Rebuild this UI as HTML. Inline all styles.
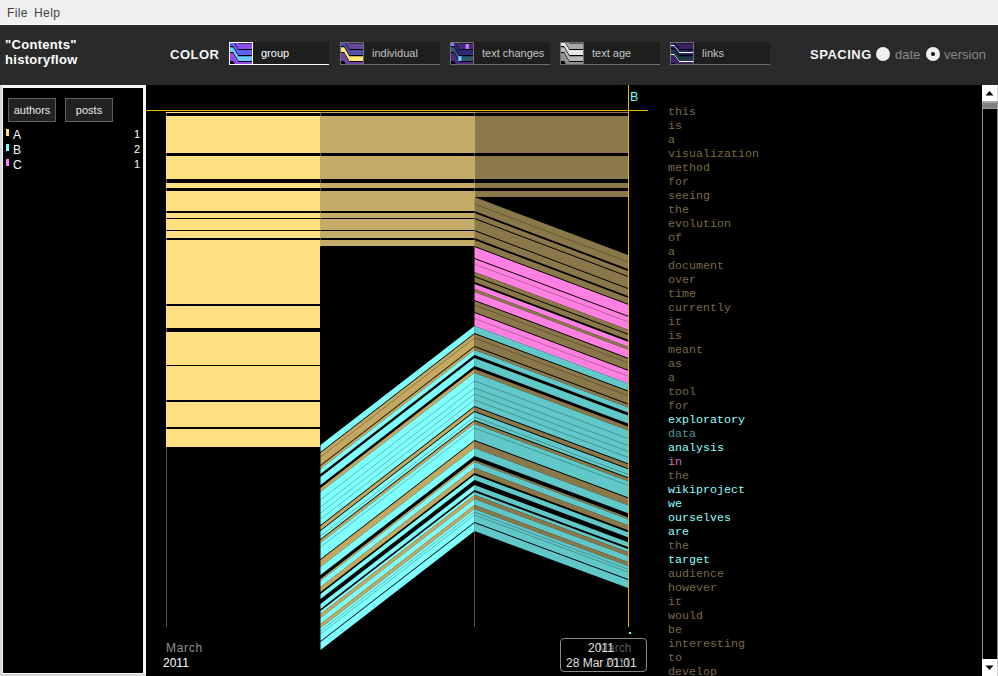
<!DOCTYPE html>
<html><head><meta charset="utf-8"><style>
*{margin:0;padding:0;box-sizing:border-box}
html,body{width:998px;height:676px;overflow:hidden;background:#000;font-family:"Liberation Sans",sans-serif}
.abs{position:absolute}
#menu{left:0;top:0;width:998px;height:25px;background:#f0f0f0;border-bottom:1px solid #fafafa}
#menu span{position:absolute;top:6px;font-size:12px;color:#404040;letter-spacing:0.4px}
#tb{left:0;top:25px;width:998px;height:60px;background:#2a2a2a}
.ttl{color:#fff;font-weight:bold;font-size:13px;left:5px;letter-spacing:0.3px}
.lbl{color:#f4f4f4;font-weight:bold;font-size:13px;letter-spacing:0.5px}
.btn{position:absolute;top:42px;height:23px;width:100px;background:#1e1e1e;border-bottom:1px solid #707070}
.btn.sel{border-bottom:1px solid #fff}
.sw{position:absolute;left:0;top:0;width:24px;height:23px;border:1px solid #707070;background:#000;overflow:hidden}
.sel .sw{border-color:#fff}
.btn span{position:absolute;left:32px;top:5px;font-size:11px;color:#c4c4c4;white-space:nowrap}
.sel span{color:#fff}
#panel{left:0;top:85px;width:146px;height:591px;background:#d8d8d8}
#pin{left:3px;top:3px;width:140px;height:585px;background:#000}
#pbor{left:2px;top:0px;width:144px;height:589px;border-style:solid;border-color:#f4f4f4;border-width:3px 3px 1px 1px}
.pb{position:absolute;top:13px;height:24px;border:1px solid #606060;background:#222;color:#e8e8e8;font-size:11px;text-align:center;line-height:23px}
.leg{position:absolute;left:13px;color:#fff;font-size:12px}
.legc{position:absolute;left:6px;width:3px;height:7px}
.num{position:absolute;left:134px;color:#fff;font-size:11px}
#viz{left:146px;top:85px;width:836px;height:591px;background:#000}
#words{left:668px;top:105px;font-family:"Liberation Mono",monospace;font-size:11.67px;line-height:14px;font-weight:normal}
#sb{left:982px;top:85px;width:16px;height:591px;background:#000;border-left:1px solid #909090;border-right:1px solid #909090}
</style></head><body>
<div id="menu" class="abs"><span style="left:7px">File</span><span style="left:34px">Help</span></div>
<div id="tb" class="abs">
<div class="abs ttl" style="top:12px">"Contents"</div>
<div class="abs ttl" style="top:27px">historyflow</div>
<div class="abs lbl" style="left:170px;top:22px">COLOR</div>
<div class="abs lbl" style="left:810px;top:22px">SPACING</div>
</div>
<div class="btn sel" style="left:229px"><div class="sw"><svg width="22" height="21" viewBox="0 0 21 21" preserveAspectRatio="none" style="position:absolute;left:0;top:0"><polygon points="0,-8.5 3,-8.5 8,0.5 21,0.5 21,6 8,6 3,-3 0,-3" fill="#9050e8"/><polygon points="0,-2 3,-2 8,7 21,7 21,12 8,12 3,3 0,3" fill="#6060ff"/><polygon points="0,4.199999999999999 3,4.199999999999999 8,13.2 21,13.2 21,18 8,18 3,9 0,9" fill="#70c8ff"/><polygon points="0,10 3,10 8,19 21,19 21,27 8,27 3,18 0,18" fill="#9050e8"/></svg></div><span>group</span></div>
<div class="btn" style="left:340px"><div class="sw"><svg width="22" height="21" viewBox="0 0 21 21" preserveAspectRatio="none" style="position:absolute;left:0;top:0"><polygon points="0,-8.5 3,-8.5 8,0.5 21,0.5 21,6 8,6 3,-3 0,-3" fill="#6a4898"/><polygon points="0,-2 3,-2 8,7 21,7 21,12 8,12 3,3 0,3" fill="#5050a8"/><polygon points="0,4.199999999999999 3,4.199999999999999 8,13.2 21,13.2 21,18 8,18 3,9 0,9" fill="#ffe878"/><polygon points="0,10 3,10 8,19 21,19 21,27 8,27 3,18 0,18" fill="#6a48a0"/></svg></div><span>individual</span></div>
<div class="btn" style="left:450px"><div class="sw"><svg width="22" height="21" viewBox="0 0 21 21" preserveAspectRatio="none" style="position:absolute;left:0;top:0"><polygon points="0,-8.5 3,-8.5 8,0.5 21,0.5 21,6 8,6 3,-3 0,-3" fill="#4a2a78"/><polygon points="0,-2 3,-2 8,7 21,7 21,12 8,12 3,3 0,3" fill="#302878"/><polygon points="0,4.199999999999999 3,4.199999999999999 8,13.2 21,13.2 21,18 8,18 3,9 0,9" fill="#305870"/><polygon points="0,10 3,10 8,19 21,19 21,27 8,27 3,18 0,18" fill="#4a2a80"/><rect x="14" y="1" width="3" height="5" fill="#c080ff"/><rect x="7" y="13.2" width="3" height="4.8" fill="#70d0ff"/><rect x="0" y="0" width="3" height="3" fill="#8080ff"/></svg></div><span>text changes</span></div>
<div class="btn" style="left:560px"><div class="sw"><svg width="22" height="21" viewBox="0 0 21 21" preserveAspectRatio="none" style="position:absolute;left:0;top:0"><polygon points="0,-8.5 3,-8.5 8,0.5 21,0.5 21,6 8,6 3,-3 0,-3" fill="#a8a8a8"/><polygon points="0,-2 3,-2 8,7 21,7 21,12 8,12 3,3 0,3" fill="#e8e8e8"/><polygon points="0,4.199999999999999 3,4.199999999999999 8,13.2 21,13.2 21,18 8,18 3,9 0,9" fill="#b8b8b8"/><polygon points="0,10 3,10 8,19 21,19 21,27 8,27 3,18 0,18" fill="#909090"/></svg></div><span>text age</span></div>
<div class="btn" style="left:670px"><div class="sw"><svg width="22" height="21" viewBox="0 0 21 21" preserveAspectRatio="none" style="position:absolute;left:0;top:0"><polygon points="0,-6.5 3,-6.5 8,0.5 21,0.5 21,6 8,6 3,-1 0,-1" fill="#3a2060"/><polygon points="0,0 3,0 8,7 21,7 21,9 8,9 3,2 0,2" fill="#202068"/><polygon points="0,2 3,2 8,9 21,9 21,10.2 8,10.2 3,3.1999999999999993 0,3.1999999999999993" fill="#ffffff"/><polygon points="0,3.1999999999999993 3,3.1999999999999993 8,10.2 21,10.2 21,12 8,12 3,5 0,5" fill="#202068"/><polygon points="0,6.199999999999999 3,6.199999999999999 8,13.2 21,13.2 21,18 8,18 3,11 0,11" fill="#203848"/><polygon points="0,11 3,11 8,18 21,18 21,19.3 8,19.3 3,12.3 0,12.3" fill="#ffffff"/><polygon points="0,12.3 3,12.3 8,19.3 21,19.3 21,27 8,27 3,20 0,20" fill="#3a2060"/></svg></div><span>links</span></div>
<div class="abs" style="left:876px;top:47px;width:14px;height:14px;border-radius:50%;background:#f0f0f0"></div>
<div class="abs" style="left:895px;top:47px;font-size:13px;color:#888">date</div>
<div class="abs" style="left:926px;top:47px;width:14px;height:14px;border-radius:50%;background:#f0f0f0"><div class="abs" style="left:5px;top:5px;width:4px;height:4px;border-radius:50%;background:#000"></div></div>
<div class="abs" style="left:944px;top:47px;font-size:13px;color:#888">version</div>
<div id="panel" class="abs"><div id="pin" class="abs"></div><div id="pbor" class="abs"></div>
<div class="pb" style="left:8px;width:48px">authors</div>
<div class="pb" style="left:65px;width:48px">posts</div>
<div class="legc" style="top:44px;background:#ffe080"></div><div class="leg" style="top:43px">A</div><div class="num" style="top:43px">1</div>
<div class="legc" style="top:59px;background:#80ffff"></div><div class="leg" style="top:58px">B</div><div class="num" style="top:58px">2</div>
<div class="legc" style="top:74px;background:#ff80ff"></div><div class="leg" style="top:73px">C</div><div class="num" style="top:73px">1</div>
</div>
<div id="viz" class="abs"></div>
<svg class="abs" style="left:0;top:0" width="998" height="676" viewBox="0 0 998 676">
<rect x="166" y="112" width="1" height="515" fill="#505050"/>
<rect x="320" y="112" width="1" height="135" fill="#505050"/>
<rect x="474" y="112" width="1" height="135" fill="#505050"/>
<rect x="474" y="531" width="1" height="96" fill="#505050"/>
<rect x="166" y="112" width="154" height="1" fill="#ffe080"/>
<rect x="166" y="116" width="154" height="37" fill="#ffe080"/>
<rect x="166" y="156" width="154" height="23" fill="#ffe080"/>
<rect x="166" y="183" width="154" height="5" fill="#ffe080"/>
<rect x="166" y="191" width="154" height="20" fill="#ffe080"/>
<rect x="166" y="213" width="154" height="5" fill="#ffe080"/>
<rect x="166" y="219" width="154" height="11" fill="#ffe080"/>
<rect x="166" y="231" width="154" height="7" fill="#ffe080"/>
<rect x="166" y="240" width="154" height="64" fill="#ffe080"/>
<rect x="166" y="306" width="154" height="22" fill="#ffe080"/>
<rect x="166" y="332" width="154" height="33" fill="#ffe080"/>
<rect x="166" y="366" width="154" height="34" fill="#ffe080"/>
<rect x="166" y="402" width="154" height="25" fill="#ffe080"/>
<rect x="166" y="429" width="154" height="18" fill="#ffe080"/>
<rect x="320" y="112" width="155" height="1" fill="#c4ac68"/>
<rect x="320" y="116" width="155" height="37" fill="#c4ac68"/>
<rect x="320" y="156" width="155" height="23" fill="#c4ac68"/>
<rect x="320" y="183" width="155" height="5" fill="#c4ac68"/>
<rect x="320" y="191" width="155" height="20" fill="#c4ac68"/>
<rect x="320" y="213" width="155" height="5" fill="#c4ac68"/>
<rect x="320" y="219" width="155" height="11" fill="#c4ac68"/>
<rect x="320" y="231" width="155" height="7" fill="#c4ac68"/>
<rect x="320" y="240" width="155" height="6" fill="#c4ac68"/>
<rect x="475" y="112" width="153" height="1" fill="#8a7a4a"/>
<rect x="475" y="116" width="153" height="37" fill="#8a7a4a"/>
<rect x="475" y="156" width="153" height="23" fill="#8a7a4a"/>
<rect x="475" y="183" width="153" height="5" fill="#8a7a4a"/>
<rect x="475" y="191" width="153" height="6" fill="#8a7a4a"/>
<polygon points="474.5,197 628,255.0 628,268.96 474.5,211" fill="#8a784a"/>
<polygon points="474.5,213 628,270.95 628,275.94 474.5,218" fill="#8a784a"/>
<polygon points="474.5,219 628,276.93 628,287.9 474.5,230" fill="#8a784a"/>
<polygon points="474.5,231 628,288.9 628,295.88 474.5,238" fill="#8a784a"/>
<polygon points="474.5,240 628,297.87 628,303.85 474.5,246" fill="#8a784a"/>
<polygon points="474.5,247 628,304.85 628,315.82 474.5,258" fill="#ff80e0"/>
<polygon points="474.5,259 628,316.81 628,329.78 474.5,272" fill="#ff80e0"/>
<polygon points="474.5,272 628,329.78 628,333.76 474.5,276" fill="#8a784a"/>
<polygon points="474.5,277 628,334.76 628,339.75 474.5,282" fill="#8a784a"/>
<polygon points="474.5,284 628,341.74 628,346.72 474.5,289" fill="#ff80e0"/>
<polygon points="474.5,289 628,346.72 628,349.72 474.5,292" fill="#8a784a"/>
<polygon points="474.5,292 628,349.72 628,357.69 474.5,300" fill="#ff80e0"/>
<polygon points="474.5,301 628,358.69 628,369.65999999999997 474.5,312" fill="#8a784a"/>
<polygon points="474.5,313 628,370.65 628,383.61 474.5,326" fill="#ff80e0"/>
<polygon points="474.5,326 628,383.61 628,390.59000000000003 474.5,333" fill="#60c8c8"/>
<polygon points="474.5,334 628,391.59000000000003 628,403.55 474.5,346" fill="#8a784a"/>
<polygon points="474.5,347 628,404.55 628,407.54 474.5,350" fill="#8a784a"/>
<polygon points="474.5,350 628,407.54 628,412.53 474.5,355" fill="#60c8c8"/>
<polygon points="474.5,358 628,415.52 628,423.49 474.5,366" fill="#60c8c8"/>
<polygon points="474.5,369 628,426.49 628,430.47 474.5,373" fill="#8a784a"/>
<polygon points="474.5,373 628,430.47 628,463.37 474.5,406" fill="#60c8c8"/>
<polygon points="474.5,407 628,464.37 628,468.36 474.5,411" fill="#8a784a"/>
<polygon points="474.5,412 628,469.36 628,477.33 474.5,420" fill="#60c8c8"/>
<polygon points="474.5,421 628,478.33 628,481.32 474.5,424" fill="#8a784a"/>
<polygon points="474.5,424 628,481.32 628,497.27 474.5,440" fill="#60c8c8"/>
<polygon points="474.5,441 628,498.27 628,505.25 474.5,448" fill="#8a784a"/>
<polygon points="474.5,448 628,505.25 628,513.22 474.5,456" fill="#60c8c8"/>
<polygon points="474.5,460 628,517.21 628,519.21 474.5,462" fill="#8a784a"/>
<polygon points="474.5,462 628,519.21 628,525.19 474.5,468" fill="#60c8c8"/>
<polygon points="474.5,468 628,525.19 628,530.17 474.5,473" fill="#8a784a"/>
<polygon points="474.5,475 628,532.17 628,537.15 474.5,480" fill="#60c8c8"/>
<polygon points="474.5,485 628,542.14 628,547.12 474.5,490" fill="#60c8c8"/>
<polygon points="474.5,492 628,549.12 628,552.11 474.5,495" fill="#60c8c8"/>
<polygon points="474.5,495 628,552.11 628,556.1 474.5,499" fill="#8a784a"/>
<polygon points="474.5,499 628,556.1 628,562.08 474.5,505" fill="#60c8c8"/>
<polygon points="474.5,505 628,562.08 628,566.07 474.5,509" fill="#8a784a"/>
<polygon points="474.5,509 628,566.07 628,579.03 474.5,522" fill="#60c8c8"/>
<polygon points="474.5,523 628,580.02 628,588.0 474.5,531" fill="#60c8c8"/>
<polygon points="320.5,445 474.5,326 474.5,333 320.5,452" fill="#80ffff"/>
<polygon points="320.5,453 474.5,334 474.5,346 320.5,465" fill="#c4a862"/>
<polygon points="320.5,466 474.5,347 474.5,350 320.5,469" fill="#c4a862"/>
<polygon points="320.5,469 474.5,350 474.5,355 320.5,474" fill="#80ffff"/>
<polygon points="320.5,477 474.5,358 474.5,366 320.5,485" fill="#80ffff"/>
<polygon points="320.5,488 474.5,369 474.5,373 320.5,492" fill="#c4a862"/>
<polygon points="320.5,492 474.5,373 474.5,406 320.5,525" fill="#80ffff"/>
<polygon points="320.5,526 474.5,407 474.5,411 320.5,530" fill="#c4a862"/>
<polygon points="320.5,531 474.5,412 474.5,420 320.5,539" fill="#80ffff"/>
<polygon points="320.5,540 474.5,421 474.5,424 320.5,543" fill="#c4a862"/>
<polygon points="320.5,543 474.5,424 474.5,440 320.5,559" fill="#80ffff"/>
<polygon points="320.5,560 474.5,441 474.5,448 320.5,567" fill="#c4a862"/>
<polygon points="320.5,567 474.5,448 474.5,456 320.5,575" fill="#80ffff"/>
<polygon points="320.5,579 474.5,460 474.5,462 320.5,581" fill="#c4a862"/>
<polygon points="320.5,581 474.5,462 474.5,468 320.5,587" fill="#80ffff"/>
<polygon points="320.5,587 474.5,468 474.5,473 320.5,592" fill="#c4a862"/>
<polygon points="320.5,594 474.5,475 474.5,480 320.5,599" fill="#80ffff"/>
<polygon points="320.5,604 474.5,485 474.5,490 320.5,609" fill="#80ffff"/>
<polygon points="320.5,611 474.5,492 474.5,495 320.5,614" fill="#80ffff"/>
<polygon points="320.5,614 474.5,495 474.5,499 320.5,618" fill="#c4a862"/>
<polygon points="320.5,618 474.5,499 474.5,505 320.5,624" fill="#80ffff"/>
<polygon points="320.5,624 474.5,505 474.5,509 320.5,628" fill="#c4a862"/>
<polygon points="320.5,628 474.5,509 474.5,522 320.5,641" fill="#80ffff"/>
<polygon points="320.5,642 474.5,523 474.5,531 320.5,650" fill="#80ffff"/>
<line x1="474.5" y1="204" x2="628" y2="261.98" stroke="#000" stroke-width="0.6" stroke-opacity="0.45"/>
<line x1="474.5" y1="264" x2="628" y2="321.8" stroke="#000" stroke-width="0.6" stroke-opacity="0.45"/>
<line x1="474.5" y1="305" x2="628" y2="362.68" stroke="#000" stroke-width="0.6" stroke-opacity="0.45"/>
<line x1="474.5" y1="318.5" x2="628" y2="376.14" stroke="#000" stroke-width="0.6" stroke-opacity="0.45"/>
<line x1="474.5" y1="338" x2="628" y2="395.58" stroke="#000" stroke-width="0.6" stroke-opacity="0.45"/>
<line x1="474.5" y1="381" x2="628" y2="438.45" stroke="#000" stroke-width="0.6" stroke-opacity="0.45"/>
<line x1="474.5" y1="388" x2="628" y2="445.43" stroke="#000" stroke-width="0.6" stroke-opacity="0.45"/>
<line x1="474.5" y1="394" x2="628" y2="451.40999999999997" stroke="#000" stroke-width="0.6" stroke-opacity="0.45"/>
<line x1="474.5" y1="400" x2="628" y2="457.39" stroke="#000" stroke-width="0.6" stroke-opacity="0.45"/>
<line x1="474.5" y1="417" x2="628" y2="474.34000000000003" stroke="#000" stroke-width="0.6" stroke-opacity="0.45"/>
<line x1="474.5" y1="428" x2="628" y2="485.31" stroke="#000" stroke-width="0.6" stroke-opacity="0.45"/>
<line x1="474.5" y1="512" x2="628" y2="569.06" stroke="#000" stroke-width="0.6" stroke-opacity="0.45"/>
<line x1="474.5" y1="515" x2="628" y2="572.05" stroke="#000" stroke-width="0.6" stroke-opacity="0.45"/>
<line x1="320.5" y1="457" x2="474.5" y2="338" stroke="#000" stroke-width="0.6" stroke-opacity="0.45"/>
<line x1="320.5" y1="500" x2="474.5" y2="381" stroke="#000" stroke-width="0.6" stroke-opacity="0.45"/>
<line x1="320.5" y1="507" x2="474.5" y2="388" stroke="#000" stroke-width="0.6" stroke-opacity="0.45"/>
<line x1="320.5" y1="513" x2="474.5" y2="394" stroke="#000" stroke-width="0.6" stroke-opacity="0.45"/>
<line x1="320.5" y1="519" x2="474.5" y2="400" stroke="#000" stroke-width="0.6" stroke-opacity="0.45"/>
<line x1="320.5" y1="536" x2="474.5" y2="417" stroke="#000" stroke-width="0.6" stroke-opacity="0.45"/>
<line x1="320.5" y1="547" x2="474.5" y2="428" stroke="#000" stroke-width="0.6" stroke-opacity="0.45"/>
<line x1="320.5" y1="631" x2="474.5" y2="512" stroke="#000" stroke-width="0.6" stroke-opacity="0.45"/>
<line x1="320.5" y1="634" x2="474.5" y2="515" stroke="#000" stroke-width="0.6" stroke-opacity="0.45"/>
<rect x="146" y="110" width="502" height="1" fill="#f0b400"/>
<rect x="628" y="85" width="1" height="542" fill="#f0b400"/>
<rect x="629" y="632" width="2" height="2" fill="#80ffff"/>
</svg>
<div class="abs" style="left:630px;top:90px;color:#80ffff;font-size:12.5px">B</div>
<div id="words" class="abs"><div style="color:#7a6a48">this</div><div style="color:#7a6a48">is</div><div style="color:#7a6a48">a</div><div style="color:#7a6a48">visualization</div><div style="color:#7a6a48">method</div><div style="color:#7a6a48">for</div><div style="color:#7a6a48">seeing</div><div style="color:#7a6a48">the</div><div style="color:#7a6a48">evolution</div><div style="color:#7a6a48">of</div><div style="color:#7a6a48">a</div><div style="color:#7a6a48">document</div><div style="color:#7a6a48">over</div><div style="color:#7a6a48">time</div><div style="color:#7a6a48">currently</div><div style="color:#7a6a48">it</div><div style="color:#7a6a48">is</div><div style="color:#7a6a48">meant</div><div style="color:#7a6a48">as</div><div style="color:#7a6a48">a</div><div style="color:#7a6a48">tool</div><div style="color:#7a6a48">for</div><div style="color:#90ffff">exploratory</div><div style="color:#4a9a9a">data</div><div style="color:#90ffff">analysis</div><div style="color:#d070c0">in</div><div style="color:#7a6a48">the</div><div style="color:#90ffff">wikiproject</div><div style="color:#90ffff">we</div><div style="color:#90ffff">ourselves</div><div style="color:#90ffff">are</div><div style="color:#7a6a48">the</div><div style="color:#90ffff">target</div><div style="color:#7a6a48">audience</div><div style="color:#7a6a48">however</div><div style="color:#7a6a48">it</div><div style="color:#7a6a48">would</div><div style="color:#7a6a48">be</div><div style="color:#7a6a48">interesting</div><div style="color:#7a6a48">to</div><div style="color:#7a6a48">develop</div></div>
<div class="abs" style="left:166px;top:641px;color:#909090;font-size:12px;letter-spacing:0.7px">March</div>
<div class="abs" style="left:163px;top:656px;color:#fff;font-size:12px">2011</div>
<div class="abs" style="left:560px;top:638px;width:87px;height:34px;border:1px solid #8a8a8a;border-radius:4px;background:#000"></div>
<div class="abs" style="left:598px;top:641px;color:#5a5a5a;font-size:12px">March</div>
<div class="abs" style="left:605px;top:656px;color:#6a6a6a;font-size:12px">2011</div>
<div class="abs" style="left:588px;top:641px;color:#e0e0e0;font-size:12px">2011</div>
<div class="abs" style="left:566px;top:656px;color:#e0e0e0;font-size:12px">28 Mar 01:01</div>
<div class="abs" style="left:982px;top:85px;width:16px;height:591px;background:#000;border-left:1px solid #909090;border-right:1px solid #8a8a8a"></div>
<div class="abs" style="left:982px;top:85px;width:15px;height:16px;background:#fff"></div>
<div class="abs" style="left:997px;top:85px;width:1px;height:16px;background:#d0d0d0"></div>
<svg class="abs" style="left:982px;top:85px" width="16" height="16"><polygon points="3.5,10.5 11.5,10.5 7.5,6" fill="#000"/></svg>
<div class="abs" style="left:982px;top:101px;width:16px;height:8px;background:#808080;border:1px solid #9a9a9a;border-top:2px solid #a8a8a8"></div>
<div class="abs" style="left:982px;top:659px;width:15px;height:17px;background:#fff"></div>
<div class="abs" style="left:997px;top:659px;width:1px;height:17px;background:#d0d0d0"></div>
<svg class="abs" style="left:982px;top:659px" width="16" height="17"><polygon points="3.5,6.5 11.5,6.5 7.5,11" fill="#000"/></svg>
</body></html>
